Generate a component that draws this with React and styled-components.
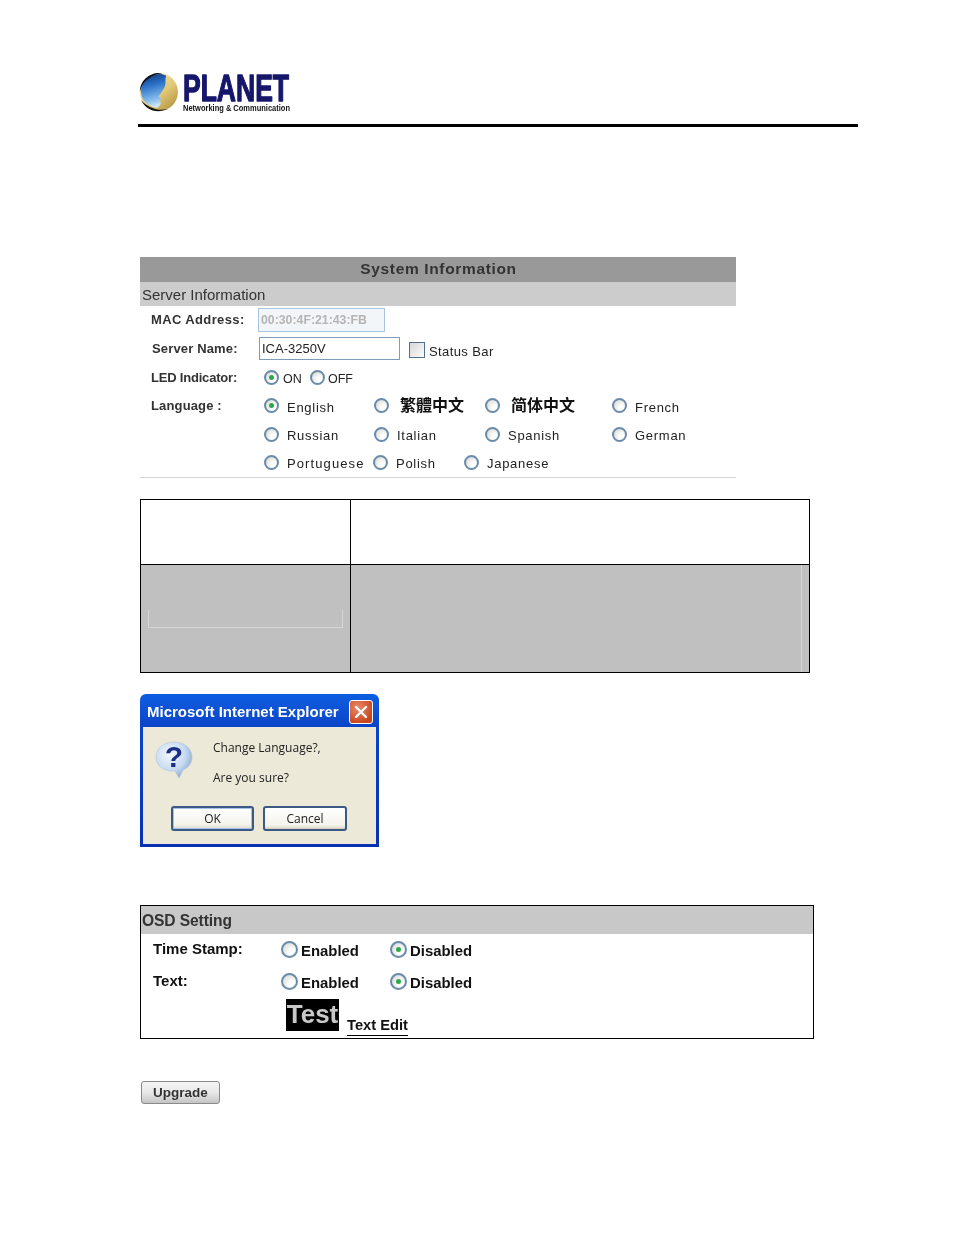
import React from "react";
import styled, { createGlobalStyle } from "styled-components";

const Global = createGlobalStyle`
  html, body { margin: 0; padding: 0; background: #fff; }
  body { font-family: "Liberation Sans", Arial, sans-serif; color: #222; }
`;

const Page = styled.div`
  width: 954px;
  height: 1235px;
  box-sizing: border-box;
  padding: 72px 96px 0 138px;
  overflow: hidden;
`;
const Header = styled.header`
  height: 52px;
  border-bottom: 3px solid #000;
  filter: blur(0.3px);
`;
const Content = styled.main`
  padding-left: 2px;
  display: flex;
  flex-direction: column;
  align-items: flex-start;
`;

const Panel = styled.section`
  width: 596px;
  height: 221px;
  margin-top: 130px;
  border-bottom: 1px solid #d4d4d4;
  box-sizing: border-box;
  filter: blur(0.3px);
`;
const TitleBar = styled.div`
  height: 25px;
  background: #999;
  color: #333;
  font-weight: 700;
  font-size: 15.5px;
  letter-spacing: 0.65px;
  line-height: 24px;
  text-align: center;
  padding-left: 1px;
  box-sizing: border-box;
`;
const SubBar = styled.div`
  height: 24px;
  background: #ccc;
  color: #333;
  font-size: 15px;
  line-height: 25px;
  padding-left: 2px;
`;
const Row = styled.div`
  display: flex;
  align-items: flex-start;
  height: ${(p) => p.$h}px;
  padding-top: ${(p) => p.$top || 0}px;
  box-sizing: border-box;
`;
const Label = styled.div`
  width: ${(p) => p.$w || 108}px;
  margin-left: ${(p) => p.$ml || 11}px;
  margin-top: ${(p) => p.$mt || 0}px;
  flex: none;
  font-size: 13px;
  font-weight: 700;
  letter-spacing: ${(p) => p.$ls ?? 0.15}px;
  color: #333;
  line-height: 16px;
`;
const TextBox = styled.div`
  box-sizing: border-box;
  width: ${(p) => p.$w}px;
  height: ${(p) => p.$h}px;
  margin-left: ${(p) => p.$ml || 0}px;
  border: 1px solid ${(p) => (p.$disabled ? "#a9c4de" : "#7f9db9")};
  background: ${(p) => (p.$disabled ? "#f3f6f9" : "#fff")};
  color: ${(p) => (p.$disabled ? "#b4b4b4" : "#222")};
  font-size: ${(p) => (p.$disabled ? 12.3 : 13)}px;
  font-weight: ${(p) => (p.$disabled ? 700 : 400)};
  padding-left: 2px;
  line-height: ${(p) => p.$h - 2}px;
`;
const Check = styled.span`
  box-sizing: border-box;
  width: 16px;
  height: 16px;
  margin: 5px 4px 0 9px;
  border: 1px solid #4f6f8f;
  background: linear-gradient(135deg, #d8d8d8, #fbfbfb);
  flex: none;
`;
const Plain = styled.span`
  font-size: 13px;
  letter-spacing: 0.4px;
  line-height: 16px;
  margin-top: ${(p) => p.$mt || 0}px;
`;
const Radio = styled.span`
  box-sizing: border-box;
  display: inline-flex;
  align-items: center;
  justify-content: center;
  flex: none;
  width: ${(p) => p.$size || 15}px;
  height: ${(p) => p.$size || 15}px;
  border-radius: 50%;
  border: 2px solid #6a8cab;
  background: radial-gradient(circle at 70% 70%, #fff 20%, #d8d8d2 90%);
  &::after {
    content: "";
    display: ${(p) => (p.$on ? "block" : "none")};
    width: 5px;
    height: 5px;
    border-radius: 50%;
    background: #2ea84a;
  }
`;
const Option = styled.div`
  display: flex;
  align-items: flex-start;
  flex: none;
  width: ${(p) => p.$w || "auto"};
  gap: ${(p) => p.$gap || 8}px;
`;
const OptionText = styled.span`
  font-size: ${(p) => p.$size || 13}px;
  letter-spacing: ${(p) => p.$ls ?? 0.72}px;
  line-height: 16px;
  margin-top: ${(p) => p.$mt ?? 2}px;
`;
const CjkText = styled.span`
  font-family: "Noto Sans CJK TC", "Noto Sans CJK SC", sans-serif;
  font-size: 16px;
  font-weight: 700;
  line-height: 16px;
  margin-top: -2px;
  color: #111;
`;
const Options = styled.div`
  display: flex;
  margin-left: 5px;
`;

const Table = styled.div`
  margin-top: 21px;
  width: 670px;
  height: 174px;
  box-sizing: border-box;
  border: 1px solid #000;
  display: grid;
  grid-template-columns: 209px 1fr;
  grid-template-rows: 64px 1fr;
`;
const Cell = styled.div`
  background: ${(p) => (p.$gray ? "#c0c0c0" : "#fff")};
  border-left: ${(p) => (p.$right ? "1px solid #000" : "none")};
  border-top: ${(p) => (p.$gray ? "1px solid #000" : "none")};
  display: flex;
  justify-content: flex-end;
`;
const Bracket = styled.div`
  box-sizing: border-box;
  width: 195px;
  height: 18px;
  margin: 45px 7px 0 7px;
  border: 1px solid #d6d6d6;
  border-top: none;
`;
const SideLine = styled.div`
  width: 7px;
  border-left: 1px solid #d6d6d6;
`;

const Dialog = styled.section`
  margin-top: 21px;
  width: 239px;
  height: 153px;
  box-sizing: border-box;
  border-radius: 6px 6px 0 0;
  background: linear-gradient(#0a5de0 0, #0f55d8 12px, #0a45c8 32px, #0731b0 100%);
  padding: 0 3px 3px;
  display: flex;
  flex-direction: column;
  filter: blur(0.3px);
`;
const DialogTitle = styled.div`
  height: 33px;
  box-sizing: border-box;
  padding: 2px 3px 0 4px;
  flex: none;
  display: flex;
  align-items: center;
  justify-content: space-between;
  color: #fff;
  font-weight: 700;
  font-size: 15px;
  white-space: nowrap;
`;
const CloseBtn = styled.div`
  width: 24px;
  height: 24px;
  box-sizing: border-box;
  border: 1px solid #fff;
  border-radius: 3px;
  background: radial-gradient(circle at 35% 30%, #e98a6c, #c9461d 75%);
  display: flex;
  align-items: center;
  justify-content: center;
`;
const DialogBody = styled.div`
  flex: 1;
  background: #ece9d8;
  display: flex;
  flex-direction: column;
`;
const Question = styled.div`
  display: flex;
  height: 79px;
`;
const BubbleWrap = styled.div`
  width: 70px;
  flex: none;
  padding: 14px 0 0 12px;
  box-sizing: border-box;
`;
const Messages = styled.div`
  display: flex;
  flex-direction: column;
  gap: 14px;
  padding-top: 13px;
  font-family: "Open Sans", sans-serif;
  font-size: 12px;
  line-height: 16px;
  color: #222;
`;
const DialogActions = styled.div`
  display: flex;
  gap: 9px;
  padding-left: 28px;
`;
const XpButton = styled.div`
  box-sizing: border-box;
  width: ${(p) => p.$w}px;
  height: 25px;
  border: 2px solid #3a5a85;
  border-radius: 3px;
  background: linear-gradient(#fff, #f4f3ec 80%, #dcd8c8);
  box-shadow: ${(p) => (p.$focus ? "inset 0 0 0 1px #a5c2ea" : "inset 0 -1px 0 #d6d0c0")};
  font-family: "Open Sans", sans-serif;
  font-size: 12px;
  line-height: 22px;
  text-align: center;
  color: #222;
`;

const Osd = styled.section`
  margin-top: 58px;
  width: 674px;
  height: 134px;
  box-sizing: border-box;
  border: 1px solid #000;
  filter: blur(0.3px);
`;
const OsdHead = styled.div`
  height: 28px;
  background: #c8c8c8;
  color: #333;
  font-weight: 700;
  font-size: 15.6px;
  line-height: 30px;
  padding-left: 1px;
  letter-spacing: -0.1px;
`;
const OsdRow = styled.div`
  display: flex;
  align-items: flex-start;
  height: ${(p) => p.$h}px;
  padding-top: ${(p) => p.$top}px;
  box-sizing: border-box;
`;
const OsdLabel = styled.div`
  width: 128px;
  margin-left: 12px;
  flex: none;
  font-weight: 700;
  font-size: 15px;
  line-height: 16px;
  color: #111;
`;
const OsdOption = styled.div`
  display: flex;
  width: ${(p) => p.$w}px;
  gap: 3px;
  flex: none;
`;
const OsdText = styled.span`
  font-weight: 700;
  font-size: 14.9px;
  line-height: 16px;
  margin-top: 2px;
  color: #111;
`;
const TestTile = styled.div`
  margin-left: 145px;
  width: 53px;
  height: 32px;
  background: #000;
  color: #c8c8c8;
  font-weight: 700;
  font-size: 26px;
  line-height: 31px;
  text-align: center;
`;
const EditLink = styled.div`
  margin: 19px 0 0 8px;
  font-weight: 700;
  font-size: 14.7px;
  line-height: 15px;
  color: #111;
  padding-bottom: 2px;
  border-bottom: 1px solid #000;
`;
const UpgradeButton = styled.div`
  margin: 42px 0 0 1px;
  box-sizing: border-box;
  width: 79px;
  height: 23px;
  border: 1px solid #8a8a8a;
  border-radius: 3px;
  background: linear-gradient(#f6f6f6, #e6e6e6 55%, #c4c4c4);
  font-weight: 700;
  font-size: 13.5px;
  line-height: 21px;
  text-align: center;
  color: #333;
  filter: blur(0.3px);
`;

const Logo = () => (
  <svg width="200" height="42" viewBox="0 0 200 42" style={{ display: "block" }}>
    <defs>
      <linearGradient id="sky" x1="0.2" y1="0" x2="0.4" y2="1">
        <stop offset="0" stopColor="#12387f" />
        <stop offset="0.35" stopColor="#2a70c8" />
        <stop offset="0.75" stopColor="#7fb8ea" />
        <stop offset="1" stopColor="#d5e8f6" />
      </linearGradient>
      <linearGradient id="gold" x1="0.2" y1="0" x2="1" y2="1">
        <stop offset="0" stopColor="#f3e6b4" />
        <stop offset="0.5" stopColor="#e2c878" />
        <stop offset="1" stopColor="#a98a34" />
      </linearGradient>
    </defs>
    <circle cx="21" cy="20" r="19" fill="url(#gold)" />
    <path
      d="M28 3.5 C27 8 28 11 27 14 C26 17 24 19 23 21 L20.5 24.5 L23 26.5 L22 29 L23 31 C22 34 20 35.5 18 36 C10 34 3 28 3 19 C3 10 12 3 21 2 C24 2 26 2.6 28 3.5Z"
      fill="url(#sky)"
    />
    <path d="M24 1.2 C12 -0.5 1 9 2 21 C2.6 14 8 4 24 1.2Z" fill="#0d1220" />
    <path d="M3 28 C8 38 18 42 30 37 C20 39.5 10 36 3 28Z" fill="#14140f" />
    <text x="45" y="29" fontFamily="'Liberation Sans', sans-serif" fontWeight="700" fontSize="36" fill="#16166b" textLength="106" lengthAdjust="spacingAndGlyphs" stroke="#16166b" strokeWidth="1.3" strokeLinejoin="round">PLANET</text>
    <text x="45" y="38.5" fontFamily="'Liberation Sans', sans-serif" fontWeight="700" fontSize="8.5" fill="#111" textLength="107" lengthAdjust="spacingAndGlyphs">Networking &amp; Communication</text>
  </svg>
);

const BubbleIcon = () => (
  <svg width="38" height="38" viewBox="0 0 38 38" style={{ display: "block" }}>
    <defs>
      <radialGradient id="bub" cx="0.38" cy="0.35" r="0.75">
        <stop offset="0" stopColor="#f4f8fd" />
        <stop offset="0.6" stopColor="#c4d9f0" />
        <stop offset="1" stopColor="#7d9dc8" />
      </radialGradient>
    </defs>
    <path d="M19 1 C29 1 37 7 37 16 C37 23 33 27 28 29 L24 37 L20 30 C9 31 1 25 1 16 C1 7 9 1 19 1Z" fill="url(#bub)" stroke="#b5c5d6" strokeWidth="0.6" />
    <text x="19" y="26" textAnchor="middle" fontFamily="'Liberation Sans', sans-serif" fontWeight="700" fontSize="30" fill="#1a2f86">?</text>
  </svg>
);

const langRows = [
  [
    { w: "110px", label: "English", on: true },
    { w: "111px", cjk: "繁體中文", gap: 11 },
    { w: "127px", cjk: "简体中文", gap: 11 },
    { label: "French" },
  ],
  [
    { w: "110px", label: "Russian" },
    { w: "111px", label: "Italian" },
    { w: "127px", label: "Spanish" },
    { label: "German" },
  ],
  [
    { w: "109px", label: "Portuguese", ls: 1.1 },
    { w: "91px", label: "Polish" },
    { label: "Japanese" },
  ],
];

export default function App() {
  return (
    <Page>
      <Global />
      <Header>
        <Logo />
      </Header>
      <Content>
        <Panel>
          <TitleBar>System Information</TitleBar>
          <SubBar>Server Information</SubBar>
          <Row $h={30} $top={2}>
            <Label $w={107} $mt={4} $ls={0.38}>MAC Address:</Label>
            <TextBox $w={127} $h={24} $disabled>00:30:4F:21:43:FB</TextBox>
          </Row>
          <Row $h={29} $top={1}>
            <Label $ml={12} $w={107} $mt={4}>Server Name:</Label>
            <TextBox $w={141} $h={23}>ICA-3250V</TextBox>
            <Check />
            <Plain $mt={7}>Status Bar</Plain>
          </Row>
          <Row $h={26} $top={5}>
            <Label $ls={-0.2}>LED Indicator:</Label>
            <Options>
              <Option $w="46px" $gap={4}>
                <Radio $on />
                <OptionText $mt={1} $size={12.5} $ls={0}>ON</OptionText>
              </Option>
              <Option $gap={3}>
                <Radio />
                <OptionText $mt={1} $size={12.5} $ls={0}>OFF</OptionText>
              </Option>
            </Options>
          </Row>
          {langRows.map((row, i) => (
            <Row key={i} $h={i === 0 ? 29 : 28} $top={7}>
              <Label>{i === 0 ? "Language :" : ""}</Label>
              <Options>
                {row.map((o) => (
                  <Option key={o.label || o.cjk} $w={o.w} $gap={o.gap}>
                    <Radio $on={o.on} />
                    {o.cjk ? (
                      <CjkText>{o.cjk}</CjkText>
                    ) : (
                      <OptionText $ls={o.ls} $mt={i === 0 ? 2 : 1}>{o.label}</OptionText>
                    )}
                  </Option>
                ))}
              </Options>
            </Row>
          ))}
        </Panel>

        <Table>
          <Cell />
          <Cell $right />
          <Cell $gray>
            <Bracket />
          </Cell>
          <Cell $gray $right>
            <SideLine />
          </Cell>
        </Table>

        <Dialog>
          <DialogTitle>
            <span>Microsoft Internet Explorer</span>
            <CloseBtn>
              <svg width="14" height="14" viewBox="0 0 14 14">
                <path d="M2 2 L12 12 M12 2 L2 12" stroke="#fff" strokeWidth="2.4" strokeLinecap="round" />
              </svg>
            </CloseBtn>
          </DialogTitle>
          <DialogBody>
            <Question>
              <BubbleWrap>
                <BubbleIcon />
              </BubbleWrap>
              <Messages>
                <span>Change Language?,</span>
                <span>Are you sure?</span>
              </Messages>
            </Question>
            <DialogActions>
              <XpButton $w={83} $focus>OK</XpButton>
              <XpButton $w={84}>Cancel</XpButton>
            </DialogActions>
          </DialogBody>
        </Dialog>

        <Osd>
          <OsdHead>OSD Setting</OsdHead>
          <OsdRow $h={32} $top={7}>
            <OsdLabel>Time Stamp:</OsdLabel>
            <OsdOption $w={109}>
              <Radio $size={17} />
              <OsdText>Enabled</OsdText>
            </OsdOption>
            <OsdOption $w={100}>
              <Radio $size={17} $on />
              <OsdText>Disabled</OsdText>
            </OsdOption>
          </OsdRow>
          <OsdRow $h={33} $top={7}>
            <OsdLabel>Text:</OsdLabel>
            <OsdOption $w={109}>
              <Radio $size={17} />
              <OsdText>Enabled</OsdText>
            </OsdOption>
            <OsdOption $w={100}>
              <Radio $size={17} $on />
              <OsdText>Disabled</OsdText>
            </OsdOption>
          </OsdRow>
          <OsdRow $h={39} $top={0}>
            <TestTile>Test</TestTile>
            <EditLink>Text Edit</EditLink>
          </OsdRow>
        </Osd>

        <UpgradeButton>Upgrade</UpgradeButton>
      </Content>
    </Page>
  );
}
